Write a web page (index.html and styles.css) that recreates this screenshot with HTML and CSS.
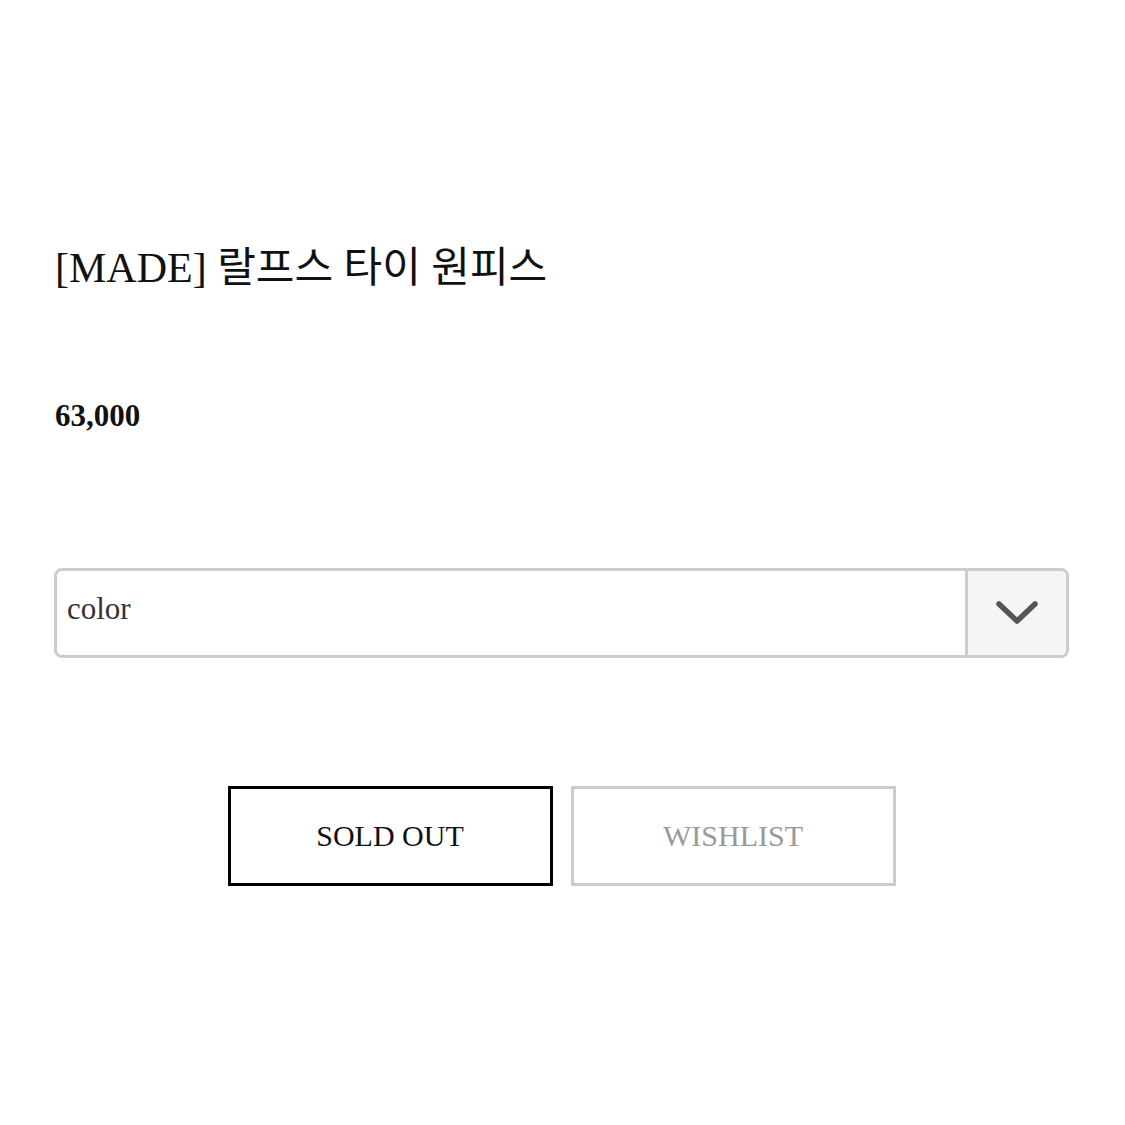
FILE: index.html
```html
<!DOCTYPE html>
<html lang="ko">
<head>
  <meta charset="UTF-8">
  <meta name="viewport" content="width=device-width, initial-scale=1.0">
  <title>[MADE] 랄프스 타이 원피스</title>
  <link rel="stylesheet" href="styles.css">
</head>
<body>
  <div class="product-info">
    <h1 class="product-name">[MADE] 랄프스 타이 원피스</h1>
    <p class="product-price">63,000</p>

    <div class="option-select">
      <span class="option-label">color</span>
      <span class="option-arrow">
        <svg width="42" height="24" viewBox="0 0 42 24">
          <polyline points="3,3 21,20 39,3" fill="none" stroke="#555" stroke-width="5.5" stroke-linecap="round" stroke-linejoin="round"/>
        </svg>
      </span>
    </div>

    <div class="action-buttons">
      <button class="btn btn-soldout" type="button">SOLD OUT</button>
      <button class="btn btn-wishlist" type="button">WISHLIST</button>
    </div>
  </div>
</body>
</html>
```

FILE: styles.css
```css
body {
  margin: 0;
  background: #fff;
  color: #111;
  font-family: "Liberation Serif", "Noto Sans CJK KR", serif;
}
.product-info {
  padding: 243px 56px 0 54px;
}
.product-name {
  margin: 0;
  font-size: 42px;
  line-height: 50px;
  font-weight: normal;
  padding-left: 1px;
}
.product-price {
  margin: 105px 0 0;
  font-size: 31px;
  line-height: 36px;
  font-weight: bold;
  padding-left: 1px;
}
.option-select {
  display: flex;
  height: 84px;
  margin-top: 134px;
  border: 3px solid #ccc;
  border-radius: 8px;
  overflow: hidden;
}
.option-label {
  flex: 1;
  padding: 20px 10px 0;
  font-size: 31px;
  line-height: 36px;
  color: #333;
}
.option-arrow {
  width: 98px;
  display: flex;
  align-items: center;
  justify-content: center;
  border-left: 3px solid #ccc;
  background: #f5f5f5;
}
.action-buttons {
  display: flex;
  justify-content: center;
  gap: 18px;
  margin-top: 128px;
}
.btn {
  width: 325px;
  height: 100px;
  background: #fff;
  font-family: "Liberation Serif", serif;
  font-size: 30px;
  cursor: pointer;
}
.btn-soldout {
  border: 3px solid #000;
  color: #111;
}
.btn-wishlist {
  border: 3px solid #ccc;
  color: #999;
}
```
